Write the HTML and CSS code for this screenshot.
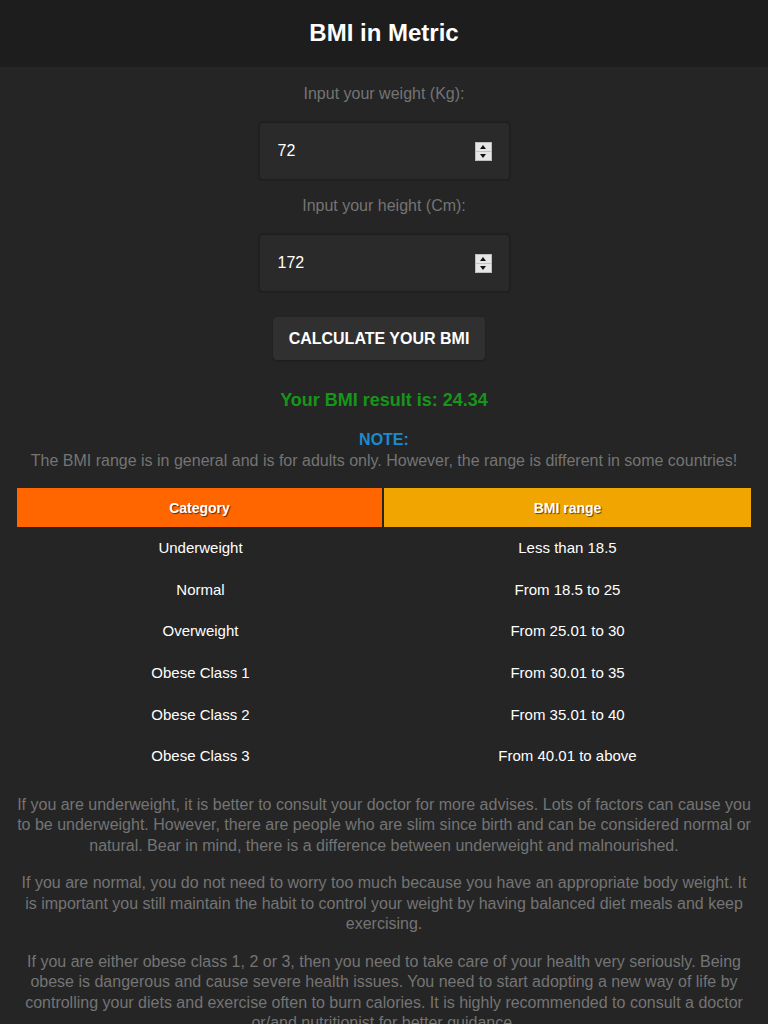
FILE: index.html
```html
<!DOCTYPE html>
<html lang="en">
<head>
    <meta charset="UTF-8">
    <meta name="viewport" content="width=device-width, initial-scale=1.0">
    <title>BMI in Metric</title>
    <link rel="stylesheet" href="styles.css">
</head>
<body>
    <header class="top-bar">
        <h1>BMI in Metric</h1>
    </header>

    <main class="calc">
        <label class="field-label">Input your weight (Kg):</label>
        <div class="field">
            <span class="field-value">72</span>
            <span class="spinner"><span class="up"></span><span class="down"></span></span>
        </div>

        <label class="field-label">Input your height (Cm):</label>
        <div class="field">
            <span class="field-value">172</span>
            <span class="spinner"><span class="up"></span><span class="down"></span></span>
        </div>

        <button class="calc-btn">CALCULATE YOUR BMI</button>

        <div class="result">Your BMI result is: 24.34</div>

        <div class="note">
            <div class="note-title">NOTE:</div>
            <div class="note-text">The BMI range is in general and is for adults only. However, the range is different in some countries!</div>
        </div>

        <table class="bmi-table">
            <thead>
                <tr>
                    <th class="col-cat">Category</th>
                    <th class="col-range">BMI range</th>
                </tr>
            </thead>
            <tbody>
                <tr><td>Underweight</td><td>Less than 18.5</td></tr>
                <tr><td>Normal</td><td>From 18.5 to 25</td></tr>
                <tr><td>Overweight</td><td>From 25.01 to 30</td></tr>
                <tr><td>Obese Class 1</td><td>From 30.01 to 35</td></tr>
                <tr><td>Obese Class 2</td><td>From 35.01 to 40</td></tr>
                <tr><td>Obese Class 3</td><td>From 40.01 to above</td></tr>
            </tbody>
        </table>

        <div class="advice">
            <p>If you are underweight, it is better to consult your doctor for more advises. Lots of factors can cause you to be underweight. However, there are people who are slim since birth and can be considered normal or natural. Bear in mind, there is a difference between underweight and malnourished.</p>
            <p>If you are normal, you do not need to worry too much because you have an appropriate body weight. It is important you still maintain the habit to control your weight by having balanced diet meals and keep exercising.</p>
            <p>If you are either obese class 1, 2 or 3, then you need to take care of your health very seriously. Being obese is dangerous and cause severe health issues. You need to start adopting a new way of life by controlling your diets and exercise often to burn calories. It is highly recommended to consult a doctor or/and nutritionist for better guidance.</p>
        </div>
    </main>
</body>
</html>
```

FILE: styles.css
```css
body {
    font-family: 'Liberation Sans', Arial, sans-serif;
    margin: 0;
    background-color: #252525;
    color: #fff;
}

.top-bar {
    background-color: #1d1d1d;
    height: 67px;
    display: flex;
    align-items: center;
    justify-content: center;
}

.top-bar h1 {
    margin: 0 0 2px;
    font-size: 24px;
    font-weight: bold;
}

.calc {
    display: flex;
    flex-direction: column;
    align-items: center;
    padding: 17px 17px 0;
}

.field-label {
    color: #747474;
    font-size: 16px;
    line-height: 20px;
    margin-bottom: 18px;
}

.field {
    box-sizing: border-box;
    width: 251px;
    height: 58px;
    background-color: #2a2a2a;
    border: 1px solid #1f1f1f;
    border-radius: 4px;
    box-shadow: 0 0 2px rgba(0, 0, 0, 0.4);
    display: flex;
    align-items: center;
    justify-content: space-between;
    padding: 0 17px 0 18px;
    margin-bottom: 16px;
}

.field-value {
    font-size: 16px;
}

.spinner {
    width: 15px;
    height: 17px;
    background-color: #e6e6e6;
    border: 1px solid #bdbdbd;
    display: flex;
    flex-direction: column;
}

.spinner .up,
.spinner .down {
    flex: 1;
    display: flex;
    align-items: center;
    justify-content: center;
}

.spinner .up {
    border-bottom: 1px solid #c4c4c4;
}

.spinner .up::after {
    content: '';
    border-left: 3px solid transparent;
    border-right: 3px solid transparent;
    border-bottom: 4px solid #111;
}

.spinner .down::after {
    content: '';
    border-left: 3px solid transparent;
    border-right: 3px solid transparent;
    border-top: 4px solid #111;
}

.calc-btn {
    margin: 9px 10px 0 0;
    width: 212px;
    height: 43px;
    background-color: #303030;
    color: #fff;
    border: none;
    border-radius: 4px;
    font-family: inherit;
    font-size: 16px;
    font-weight: bold;
    box-shadow: 0 1px 2px rgba(0, 0, 0, 0.3);
}

.result {
    margin-top: 29px;
    color: #15961a;
    font-size: 18px;
    font-weight: bold;
    line-height: 22px;
}

.note {
    margin-top: 19px;
    text-align: center;
}

.note-title {
    color: #1c8ad0;
    font-size: 16px;
    font-weight: bold;
    line-height: 20px;
}

.note-text {
    color: #747474;
    font-size: 16px;
    line-height: 21px;
}

.bmi-table {
    margin-top: 17px;
    width: 100%;
    border-collapse: separate;
    border-spacing: 0;
}

.bmi-table th {
    height: 39px;
    color: #fff;
    font-size: 14px;
    font-weight: bold;
    text-shadow: 1px 1px 1px rgba(0, 0, 0, 0.6);
    width: 50%;
    padding: 0;
}

.col-cat {
    background-color: #ff6600;
    border-right: 2px solid #252525;
}

.col-range {
    background-color: #f0a500;
}

.bmi-table td {
    height: 41.6px;
    text-align: center;
    font-size: 15px;
    padding: 0;
}

.advice {
    margin-top: 18px;
    text-align: center;
    color: #747474;
    font-size: 16px;
    line-height: 20.5px;
}

.advice p {
    margin: 0 0 17px;
}
```
